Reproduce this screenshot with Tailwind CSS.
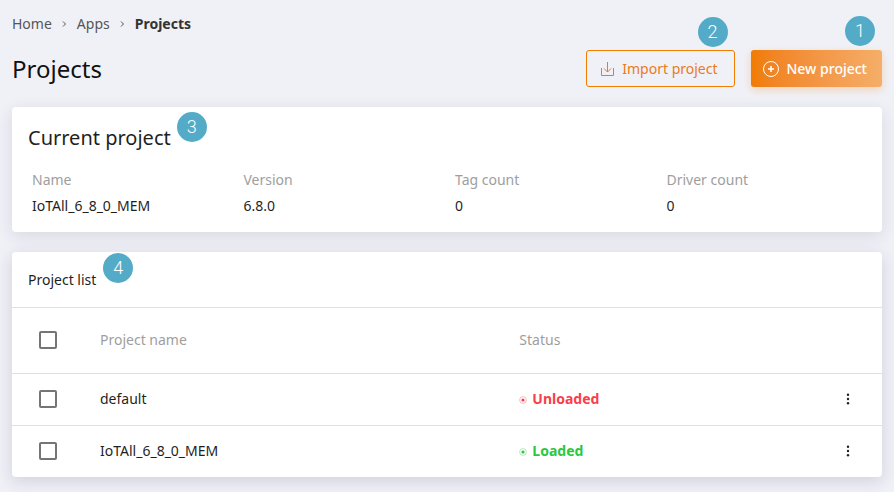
<!DOCTYPE html>
<html lang="en">
<head>
    <meta charset="UTF-8">
    <meta name="viewport" content="width=device-width, initial-scale=1.0">
    <title>Projects</title>
    <script src="https://cdn.jsdelivr.net/npm/@tailwindcss/browser@4"></script>
</head>
<body class="bg-[#f0f1f7] min-h-screen p-3 pb-[15px] font-['Noto_Sans',sans-serif] text-sm text-[#1f1f1f]">
    <!-- Breadcrumb -->
    <nav aria-label="Breadcrumb">
        <ol class="flex items-center gap-2 leading-6 text-[#555]">
            <li><a href="#">Home</a></li>
            <li aria-hidden="true">
                <svg class="w-[9px] h-2" viewBox="0 0 9 8" fill="none" stroke="currentColor"><path d="M3 1.5L5.5 4L3 6.5"></path></svg>
            </li>
            <li><a href="#">Apps</a></li>
            <li aria-hidden="true">
                <svg class="w-[9px] h-2" viewBox="0 0 9 8" fill="none" stroke="currentColor"><path d="M3 1.5L5.5 4L3 6.5"></path></svg>
            </li>
            <li class="font-bold text-[#333]" aria-current="page">Projects</li>
        </ol>
    </nav>

    <!-- Title and actions -->
    <header class="mt-[14px] flex items-center justify-between">
        <h1 class="text-2xl text-[#111]">Projects</h1>
        <div class="flex gap-4">
            <div class="relative">
                <button type="button" class="flex items-center h-[37px] pl-[13px] pr-4 gap-[7px] rounded-[3px] border border-[#f07c00] text-[#ea7a1c]">
                    <svg class="w-[15px] h-4" viewBox="0 0 15 16" fill="none" stroke="currentColor"><path d="M1.5 7V14.5H13.5V7M7.5 1V11M4 7.5L7.5 11L11 7.5"></path></svg>
                    Import project
                </button>
                <span class="absolute right-[7px] -top-[33px] flex items-center justify-center w-[30px] h-[30px] rounded-full bg-[#54abc8] font-[Roboto,sans-serif] font-light text-lg text-white">2</span>
            </div>
            <div class="relative">
                <button type="button" class="flex items-center h-[37px] pl-3 pr-[15px] gap-2 rounded-[3px] bg-linear-to-r from-[#f07c00] to-[#f5ae68] font-medium text-white shadow-[0_3px_8px_rgba(240,124,0,0.25)]">
                    <svg class="w-4 h-4" viewBox="0 0 16 16" fill="none" stroke="currentColor"><circle cx="8" cy="8" r="7.5"></circle><path d="M8 5V11M5 8H11" stroke-width="1.6"></path></svg>
                    New project
                </button>
                <span class="absolute right-[7px] -top-[34px] flex items-center justify-center w-[30px] h-[30px] rounded-full bg-[#54abc8] font-[Roboto,sans-serif] font-light text-lg text-white">1</span>
            </div>
        </div>
    </header>

    <main>
        <!-- Current project -->
        <section class="mt-5 rounded bg-white px-4 pt-4 pb-[13px] shadow-[0_4px_16px_rgba(40,40,70,0.12)]">
            <h2 class="relative w-fit text-xl leading-[30px]">
                Current project
                <span class="absolute left-full -top-[11px] ml-[6px] flex items-center justify-center w-[30px] h-[30px] rounded-full bg-[#54abc8] font-[Roboto,sans-serif] font-light text-lg text-white">3</span>
            </h2>
            <dl class="mt-[14px] grid grid-cols-4 gap-2 leading-[26px]">
                <div class="pl-1">
                    <dt class="text-[#9e9e9e]">Name</dt>
                    <dd>IoTAll_6_8_0_MEM</dd>
                </div>
                <div class="pl-1">
                    <dt class="text-[#9e9e9e]">Version</dt>
                    <dd>6.8.0</dd>
                </div>
                <div class="pl-1">
                    <dt class="text-[#9e9e9e]">Tag count</dt>
                    <dd>0</dd>
                </div>
                <div class="pl-1">
                    <dt class="text-[#9e9e9e]">Driver count</dt>
                    <dd>0</dd>
                </div>
            </dl>
        </section>

        <!-- Project list -->
        <section class="mt-5 rounded bg-white shadow-[0_4px_16px_rgba(40,40,70,0.16)]">
            <div class="flex items-center h-14 px-4 border-b border-[#e0e0e0]">
                <h2 class="relative">
                    Project list
                    <span class="absolute left-full -top-[17px] ml-[7px] flex items-center justify-center w-[30px] h-[30px] rounded-full bg-[#54abc8] font-[Roboto,sans-serif] font-light text-lg text-white">4</span>
                </h2>
            </div>
            <table class="w-full table-fixed text-left">
                <thead>
                    <tr class="h-[65px] border-b border-[#e0e0e0] text-[#9e9e9e]">
                        <th class="w-[72px] pl-[27px]">
                            <input type="checkbox" aria-label="Select all projects" class="block appearance-none w-[18px] h-[18px] rounded-xs border-2 border-[#757575] checked:bg-[#f07c00]">
                        </th>
                        <th class="w-[48.2%] px-4 font-normal">Project name</th>
                        <th class="px-4 font-normal">Status</th>
                        <th class="w-[68px]"></th>
                    </tr>
                </thead>
                <tbody>
                    <tr class="h-[52px] border-b border-[#e0e0e0]">
                        <td class="pl-[27px]">
                            <input type="checkbox" aria-label="Select default" class="block appearance-none w-[18px] h-[18px] rounded-xs border-2 border-[#757575] checked:bg-[#f07c00]">
                        </td>
                        <td class="px-4">default</td>
                        <td class="px-4">
                            <span class="flex items-center gap-[5px] font-bold text-[#f93e4b]">
                                <svg class="w-2 h-2 mt-[2px]" viewBox="0 0 8 8"><circle cx="4" cy="4" r="3.4" fill="none" stroke="currentColor" stroke-opacity="0.35"></circle><circle cx="4" cy="4" r="1.6" fill="currentColor"></circle></svg>
                                Unloaded
                            </span>
                        </td>
                        <td>
                            <button type="button" aria-label="Actions for default" class="flex items-center justify-center w-full h-8">
                                <svg class="w-3 h-3" viewBox="0 0 12 12" fill="#222"><circle cx="6" cy="1.7" r="1.2"></circle><circle cx="6" cy="6" r="1.2"></circle><circle cx="6" cy="10.3" r="1.2"></circle></svg>
                            </button>
                        </td>
                    </tr>
                    <tr class="h-[52px]">
                        <td class="pl-[27px]">
                            <input type="checkbox" aria-label="Select IoTAll_6_8_0_MEM" class="block appearance-none w-[18px] h-[18px] rounded-xs border-2 border-[#757575] checked:bg-[#f07c00]">
                        </td>
                        <td class="px-4">IoTAll_6_8_0_MEM</td>
                        <td class="px-4">
                            <span class="flex items-center gap-[5px] font-bold text-[#28c840]">
                                <svg class="w-2 h-2 mt-[2px]" viewBox="0 0 8 8"><circle cx="4" cy="4" r="3.4" fill="none" stroke="currentColor" stroke-opacity="0.35"></circle><circle cx="4" cy="4" r="1.6" fill="currentColor"></circle></svg>
                                Loaded
                            </span>
                        </td>
                        <td>
                            <button type="button" aria-label="Actions for IoTAll_6_8_0_MEM" class="flex items-center justify-center w-full h-8">
                                <svg class="w-3 h-3" viewBox="0 0 12 12" fill="#222"><circle cx="6" cy="1.7" r="1.2"></circle><circle cx="6" cy="6" r="1.2"></circle><circle cx="6" cy="10.3" r="1.2"></circle></svg>
                            </button>
                        </td>
                    </tr>
                </tbody>
            </table>
        </section>
    </main>
</body>
</html>
